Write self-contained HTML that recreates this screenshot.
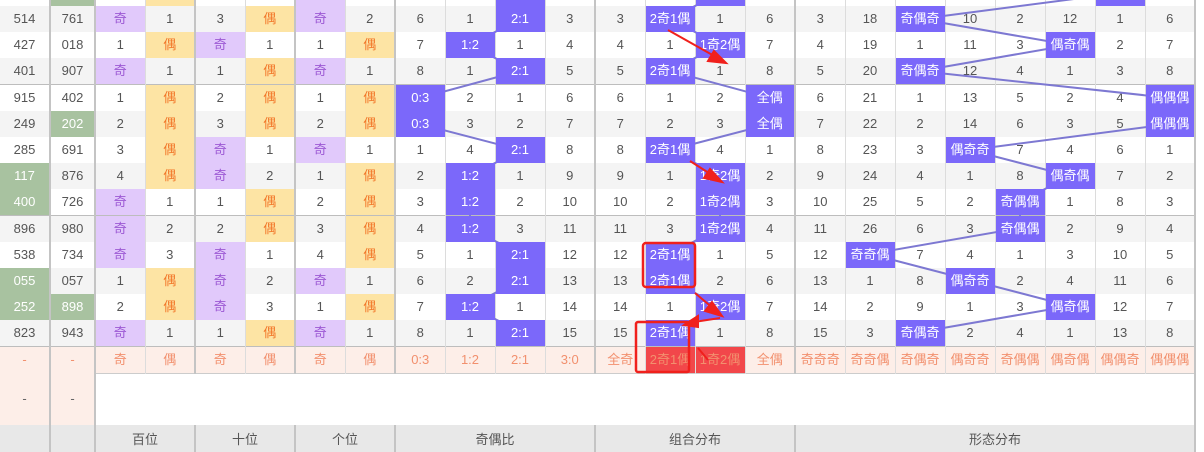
<!DOCTYPE html>
<html><head><meta charset="utf-8">
<style>
body{margin:0;width:1204px;height:440px;overflow:hidden;background:#fff;font-family:"Liberation Sans","Noto Sans CJK SC",sans-serif;position:relative}
table{position:absolute;left:0;top:-20px;border-collapse:collapse;table-layout:fixed;width:1195px}
td{height:26px;padding:0;text-align:center;font-size:13px;color:#555;border-right:1px solid #dcdcdc;white-space:nowrap;overflow:hidden;line-height:26px}
col.t{border-right:2px solid #c4c4c4}
tr.e td{background:#f4f4f4}
tr.gp{border-top:1px solid #bdbdbd}
td.p{background:#e1c9fb!important;color:#9c58d4}
td.o{background:#fde4a4!important;color:#f2782a}
td.b{background:#7b68fa!important;color:#fff;position:relative;z-index:2}
td.g{background:#a8c2a0!important;color:#fff}
td.r{background:#f2474a!important;color:#fff;position:relative;z-index:2}
tr.s td{background:#fdeee8;color:#f2906e}
tr.t td{height:51px;background:#fff}
tr.t td.k{background:#fdeee8;color:#666}
tr.f td{background:#e8e8e8;height:24px;line-height:24px;vertical-align:top;padding-top:3px;color:#555}
svg{position:absolute;left:0;top:0;z-index:1}
</style></head><body>
<table>
<colgroup><col class="t" style="width:50px"><col class="t" style="width:45px"><col style="width:50px"><col class="t" style="width:50px"><col style="width:50px"><col class="t" style="width:50px"><col style="width:50px"><col class="t" style="width:50px"><col style="width:50px"><col style="width:50px"><col style="width:50px"><col class="t" style="width:50px"><col style="width:50px"><col style="width:50px"><col style="width:50px"><col class="t" style="width:50px"><col style="width:50px"><col style="width:50px"><col style="width:50px"><col style="width:50px"><col style="width:50px"><col style="width:50px"><col style="width:50px"><col class="t" style="width:50px"></colgroup>
<tr><td></td><td class="g"></td><td></td><td class="o"></td><td></td><td></td><td class="p"></td><td></td><td></td><td></td><td class="b"></td><td></td><td></td><td></td><td class="b"></td><td></td><td></td><td></td><td></td><td></td><td></td><td></td><td class="b"></td><td></td></tr>
<tr class="e"><td>514</td><td>761</td><td class="p">奇</td><td>1</td><td>3</td><td class="o">偶</td><td class="p">奇</td><td>2</td><td>6</td><td>1</td><td class="b">2:1</td><td>3</td><td>3</td><td class="b">2奇1偶</td><td>1</td><td>6</td><td>3</td><td>18</td><td class="b">奇偶奇</td><td>10</td><td>2</td><td>12</td><td>1</td><td>6</td></tr>
<tr><td>427</td><td>018</td><td>1</td><td class="o">偶</td><td class="p">奇</td><td>1</td><td>1</td><td class="o">偶</td><td>7</td><td class="b">1:2</td><td>1</td><td>4</td><td>4</td><td>1</td><td class="b">1奇2偶</td><td>7</td><td>4</td><td>19</td><td>1</td><td>11</td><td>3</td><td class="b">偶奇偶</td><td>2</td><td>7</td></tr>
<tr class="e"><td>401</td><td>907</td><td class="p">奇</td><td>1</td><td>1</td><td class="o">偶</td><td class="p">奇</td><td>1</td><td>8</td><td>1</td><td class="b">2:1</td><td>5</td><td>5</td><td class="b">2奇1偶</td><td>1</td><td>8</td><td>5</td><td>20</td><td class="b">奇偶奇</td><td>12</td><td>4</td><td>1</td><td>3</td><td>8</td></tr>
<tr class="gp"><td>915</td><td>402</td><td>1</td><td class="o">偶</td><td>2</td><td class="o">偶</td><td>1</td><td class="o">偶</td><td class="b">0:3</td><td>2</td><td>1</td><td>6</td><td>6</td><td>1</td><td>2</td><td class="b">全偶</td><td>6</td><td>21</td><td>1</td><td>13</td><td>5</td><td>2</td><td>4</td><td class="b">偶偶偶</td></tr>
<tr class="e"><td>249</td><td class="g">202</td><td>2</td><td class="o">偶</td><td>3</td><td class="o">偶</td><td>2</td><td class="o">偶</td><td class="b">0:3</td><td>3</td><td>2</td><td>7</td><td>7</td><td>2</td><td>3</td><td class="b">全偶</td><td>7</td><td>22</td><td>2</td><td>14</td><td>6</td><td>3</td><td>5</td><td class="b">偶偶偶</td></tr>
<tr><td>285</td><td>691</td><td>3</td><td class="o">偶</td><td class="p">奇</td><td>1</td><td class="p">奇</td><td>1</td><td>1</td><td>4</td><td class="b">2:1</td><td>8</td><td>8</td><td class="b">2奇1偶</td><td>4</td><td>1</td><td>8</td><td>23</td><td>3</td><td class="b">偶奇奇</td><td>7</td><td>4</td><td>6</td><td>1</td></tr>
<tr class="e"><td class="g">117</td><td>876</td><td>4</td><td class="o">偶</td><td class="p">奇</td><td>2</td><td>1</td><td class="o">偶</td><td>2</td><td class="b">1:2</td><td>1</td><td>9</td><td>9</td><td>1</td><td class="b">1奇2偶</td><td>2</td><td>9</td><td>24</td><td>4</td><td>1</td><td>8</td><td class="b">偶奇偶</td><td>7</td><td>2</td></tr>
<tr><td class="g">400</td><td>726</td><td class="p">奇</td><td>1</td><td>1</td><td class="o">偶</td><td>2</td><td class="o">偶</td><td>3</td><td class="b">1:2</td><td>2</td><td>10</td><td>10</td><td>2</td><td class="b">1奇2偶</td><td>3</td><td>10</td><td>25</td><td>5</td><td>2</td><td class="b">奇偶偶</td><td>1</td><td>8</td><td>3</td></tr>
<tr class="e gp"><td>896</td><td>980</td><td class="p">奇</td><td>2</td><td>2</td><td class="o">偶</td><td>3</td><td class="o">偶</td><td>4</td><td class="b">1:2</td><td>3</td><td>11</td><td>11</td><td>3</td><td class="b">1奇2偶</td><td>4</td><td>11</td><td>26</td><td>6</td><td>3</td><td class="b">奇偶偶</td><td>2</td><td>9</td><td>4</td></tr>
<tr><td>538</td><td>734</td><td class="p">奇</td><td>3</td><td class="p">奇</td><td>1</td><td>4</td><td class="o">偶</td><td>5</td><td>1</td><td class="b">2:1</td><td>12</td><td>12</td><td class="b">2奇1偶</td><td>1</td><td>5</td><td>12</td><td class="b">奇奇偶</td><td>7</td><td>4</td><td>1</td><td>3</td><td>10</td><td>5</td></tr>
<tr class="e"><td class="g">055</td><td>057</td><td>1</td><td class="o">偶</td><td class="p">奇</td><td>2</td><td class="p">奇</td><td>1</td><td>6</td><td>2</td><td class="b">2:1</td><td>13</td><td>13</td><td class="b">2奇1偶</td><td>2</td><td>6</td><td>13</td><td>1</td><td>8</td><td class="b">偶奇奇</td><td>2</td><td>4</td><td>11</td><td>6</td></tr>
<tr><td class="g">252</td><td class="g">898</td><td>2</td><td class="o">偶</td><td class="p">奇</td><td>3</td><td>1</td><td class="o">偶</td><td>7</td><td class="b">1:2</td><td>1</td><td>14</td><td>14</td><td>1</td><td class="b">1奇2偶</td><td>7</td><td>14</td><td>2</td><td>9</td><td>1</td><td>3</td><td class="b">偶奇偶</td><td>12</td><td>7</td></tr>
<tr class="e"><td>823</td><td>943</td><td class="p">奇</td><td>1</td><td>1</td><td class="o">偶</td><td class="p">奇</td><td>1</td><td>8</td><td>1</td><td class="b">2:1</td><td>15</td><td>15</td><td class="b">2奇1偶</td><td>1</td><td>8</td><td>15</td><td>3</td><td class="b">奇偶奇</td><td>2</td><td>4</td><td>1</td><td>13</td><td>8</td></tr>
<tr class="s gp"><td>-</td><td>-</td><td>奇</td><td>偶</td><td>奇</td><td>偶</td><td>奇</td><td>偶</td><td>0:3</td><td>1:2</td><td>2:1</td><td>3:0</td><td>全奇</td><td class="r">2奇1偶</td><td class="r">1奇2偶</td><td>全偶</td><td>奇奇奇</td><td>奇奇偶</td><td>奇偶奇</td><td>偶奇奇</td><td>奇偶偶</td><td>偶奇偶</td><td>偶偶奇</td><td>偶偶偶</td></tr>
<tr class="t"><td class="k">-</td><td class="k">-</td><td colspan="22" style="border-top:1px solid #ccc"></td></tr>
<tr class="f"><td></td><td></td><td colspan="2">百位</td><td colspan="2">十位</td><td colspan="2">个位</td><td colspan="4">奇偶比</td><td colspan="4">组合分布</td><td colspan="8">形态分布</td></tr>
</table>
<svg width="1204" height="440" viewBox="0 0 1204 440">
<g fill="none" stroke="#7d78d2" stroke-width="2">
<polyline points="520,-7 520,19 470,45 520,71 420,98 420,124 520,150 470,176 470,202 470,228 520,254 520,280 470,306 520,332"/>
<polyline points="720,-7 670,19 720,45 670,71 770,98 770,124 670,150 720,176 720,202 720,228 670,254 670,280 720,306 670,332"/>
<polyline points="1120,-7 920,19 1070,45 920,71 1170,98 1170,124 970,150 1070,176 1020,202 1020,228 870,254 970,280 1070,306 920,332"/>
</g>
</svg>
<svg width="1204" height="440" viewBox="0 0 1204 440" style="z-index:3">
<g stroke="#f0201c" stroke-width="2" fill="#f0201c">
<line x1="668" y1="30" x2="716" y2="57"/><polygon points="726,63 708,61 714,51"/>
<line x1="690" y1="161" x2="712" y2="175"/><polygon points="722,182 704,178 710,169"/>
<line x1="695" y1="293" x2="714" y2="309"/><polygon points="722,316 705,311 712,302"/>
<line x1="720" y1="318" x2="694" y2="322"/><polygon points="684,325 698,316 698,327"/>
<line x1="698" y1="348" x2="708" y2="360"/>
</g>
<g fill="none" stroke="#f0201c" stroke-width="2.5">
<rect x="643" y="243" width="52" height="44" rx="3"/>
<rect x="636" y="322" width="53" height="50" rx="2"/>
</g>
</svg>
</body></html>
